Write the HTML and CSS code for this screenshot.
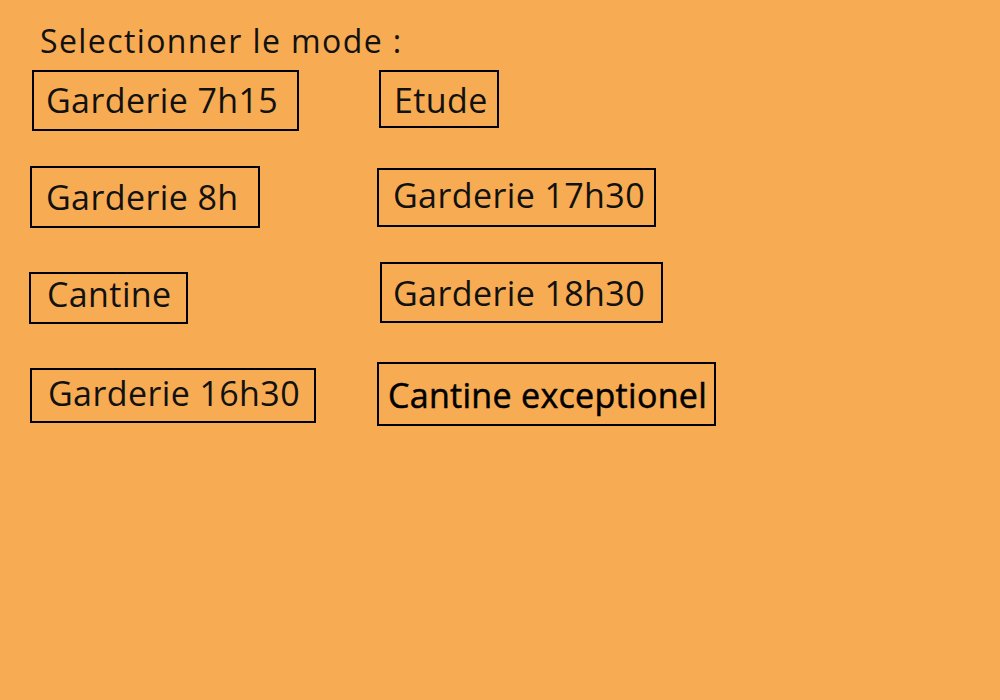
FILE: index.html
```html
<!DOCTYPE html>
<html lang="fr">
<head>
<meta charset="utf-8">
<title>Selectionner le mode</title>
<link rel="stylesheet" href="styles.css">
</head>
<body>
<main class="page">
  <h1 class="title">Selectionner le mode :</h1>
  <div class="modes">
    <button class="mode m-7h15">Garderie 7h15</button>
    <button class="mode m-etude">Etude</button>
    <button class="mode m-8h">Garderie 8h</button>
    <button class="mode m-17h30">Garderie 17h30</button>
    <button class="mode m-cantine">Cantine</button>
    <button class="mode m-18h30">Garderie 18h30</button>
    <button class="mode m-16h30">Garderie 16h30</button>
    <button class="mode m-exc">Cantine exceptionel</button>
  </div>
</main>
</body>
</html>
```
FILE: styles.css
```css
html, body {
  margin: 0;
  padding: 0;
  background: #f7ab52;
  height: 100%;
}
.page {
  padding: 21px 0 0 29px;
  font-family: "Open Sans", "Noto Sans", sans-serif;
  color: #111;
}
.title {
  margin: 0 0 9px 0;
  padding-left: 11px;
  font-size: 32px;
  font-weight: 400;
  line-height: 40px;
  letter-spacing: 1.4px;
}
.modes {
  display: grid;
  grid-template-columns: 348px auto;
  grid-template-rows: 96px 96px 98px auto;
  justify-items: start;
  align-items: start;
}
.mode {
  font-family: inherit;
  color: inherit;
  background: transparent;
  border: 2px solid #000;
  border-radius: 0;
  font-size: 34px;
  line-height: 40px;
  letter-spacing: 0.4px;
  margin: 0;
  padding: 8px 16px 8px 12px;
  white-space: nowrap;
  cursor: pointer;
}
.m-7h15 { margin-left: 3px; padding: 8px 19px 9px 12px; }
.m-etude { margin-left: 2px; padding: 8px 9px 6px 13px; }
.m-8h { margin-left: 1px; padding: 9px 19px 9px 14px; }
.m-17h30 { margin-top: 2px; padding: 5px 9px 10px 14px; }
.m-cantine { margin-top: 10px; padding: 0 14px 8px 16px; }
.m-18h30 { margin-left: 3px; padding: 9px 16px 8px 11px; }
.m-16h30 { margin-left: 1px; margin-top: 8px; padding: 3px 14px 8px 16px; }
.m-exc {
  margin-top: 2px;
  padding: 11px 7px 9px 9px;
  letter-spacing: 0.3px;
  color: #000;
  -webkit-text-stroke: 0.5px #000;
}
```
